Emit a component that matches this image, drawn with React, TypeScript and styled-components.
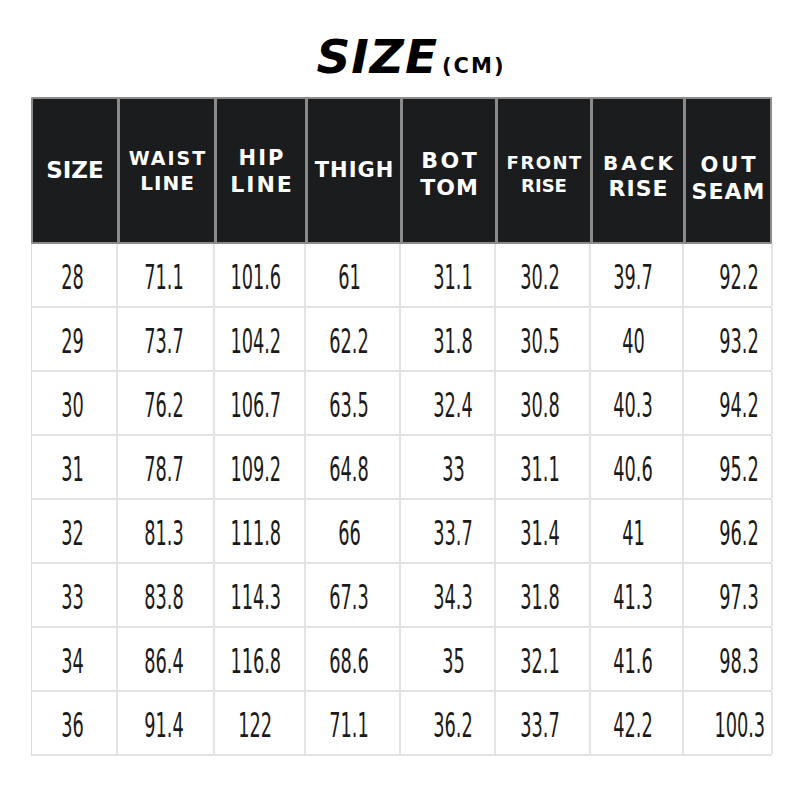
import React from 'react'
import styled, { createGlobalStyle } from 'styled-components'

const GlobalStyle = createGlobalStyle`
  html, body {
    margin: 0;
    padding: 0;
    background: #ffffff;
  }
`

const COLUMNS = '86px 97px 91px 95px 95px 95px 93px 89px'

const Page = styled.div`
  width: 800px;
  height: 800px;
  background: #ffffff;
  display: flex;
  flex-direction: column;
  align-items: flex-start;
`

const Title = styled.h1`
  margin: 0;
  align-self: center;
  padding: 33px 0 0 22px;
  height: 97px;
  box-sizing: border-box;
  display: flex;
  align-items: baseline;
  font-family: 'DejaVu Sans', sans-serif;
  font-weight: 700;
  font-style: oblique;
  color: #000000;
  line-height: 1;
`

const TitleMain = styled.span`
  font-size: 47px;
  letter-spacing: 1px;
`

const TitleUnit = styled.span`
  font-size: 21px;
  letter-spacing: 2px;
  font-style: normal;
  margin-left: 4px;
`

const Table = styled.div`
  margin-left: 31px;
  width: 741px;
  display: flex;
  flex-direction: column;
`

const HeaderRow = styled.div`
  display: grid;
  grid-template-columns: ${COLUMNS};
  height: 147px;
  box-sizing: border-box;
  background: #8b8b8b;
  border-radius: 1px;
`

const HeaderCell = styled.div<{ $shift: number; $last: boolean }>`
  background: #1b1c1e;
  margin: 2px ${(p) => (p.$last ? 2 : 0)}px 2px 3px;
  display: flex;
  flex-direction: column;
  align-items: center;
  justify-content: center;
  gap: 5px;
  padding-top: ${(p) => p.$shift}px;
  box-sizing: border-box;
  &:first-child {
    margin-left: 2px;
  }
`

const HeaderLine = styled.span<{ $size: number; $spacing: number }>`
  font-family: 'DejaVu Sans', 'Verdana', sans-serif;
  font-weight: 700;
  color: #ffffff;
  font-size: ${(p) => p.$size}px;
  letter-spacing: ${(p) => p.$spacing}px;
  margin-right: -${(p) => p.$spacing}px;
  line-height: 1;
  white-space: nowrap;
`

const BodyRow = styled.div`
  display: grid;
  grid-template-columns: ${COLUMNS};
  height: 64px;
  box-sizing: border-box;
  border-bottom: 2px solid #e3e3e3;
  border-left: 1px solid #dcdcdc;
`

const Cell = styled.div<{ $nudge: number }>`
  border-right: 2px solid #e3e3e3;
  display: flex;
  align-items: center;
  justify-content: center;
  padding-left: ${(p) => Math.max(p.$nudge, 0)}px;
  padding-right: ${(p) => Math.max(-p.$nudge, 0)}px;
  padding-top: 4px;
  box-sizing: border-box;
`

const Value = styled.span`
  font-family: 'DejaVu Sans Condensed', 'DejaVu Sans', sans-serif;
  font-weight: 400;
  font-size: 34px;
  color: #1a1a1a;
  display: inline-block;
  transform: scaleX(0.58);
  line-height: 1;
`

type Line = { text: string; size: number; spacing: number }
type Head = { lines: Line[]; shift: number }

const HEADERS: Head[] = [
  { lines: [{ text: 'SIZE', size: 23, spacing: 0 }], shift: 0 },
  {
    lines: [
      { text: 'WAIST', size: 19, spacing: 2 },
      { text: 'LINE', size: 20, spacing: 1 },
    ],
    shift: 0,
  },
  {
    lines: [
      { text: 'HIP', size: 21, spacing: 2 },
      { text: 'LINE', size: 22, spacing: 2 },
    ],
    shift: 2,
  },
  { lines: [{ text: 'THIGH', size: 21, spacing: 1 }], shift: 0 },
  {
    lines: [
      { text: 'BOT', size: 22, spacing: 2.5 },
      { text: 'TOM', size: 22, spacing: 1 },
    ],
    shift: 8,
  },
  {
    lines: [
      { text: 'FRONT', size: 18, spacing: 1.5 },
      { text: 'RISE', size: 18, spacing: 0 },
    ],
    shift: 8,
  },
  {
    lines: [
      { text: 'BACK', size: 20, spacing: 3 },
      { text: 'RISE', size: 22, spacing: 1 },
    ],
    shift: 12,
  },
  {
    lines: [
      { text: 'OUT', size: 21, spacing: 3 },
      { text: 'SEAM', size: 22, spacing: 1 },
    ],
    shift: 16,
  },
]

const NUDGE = [-4, -2, -8, -6, 12, -4, -6, 24]

const ROWS: string[][] = [
  ['28', '71.1', '101.6', '61', '31.1', '30.2', '39.7', '92.2'],
  ['29', '73.7', '104.2', '62.2', '31.8', '30.5', '40', '93.2'],
  ['30', '76.2', '106.7', '63.5', '32.4', '30.8', '40.3', '94.2'],
  ['31', '78.7', '109.2', '64.8', '33', '31.1', '40.6', '95.2'],
  ['32', '81.3', '111.8', '66', '33.7', '31.4', '41', '96.2'],
  ['33', '83.8', '114.3', '67.3', '34.3', '31.8', '41.3', '97.3'],
  ['34', '86.4', '116.8', '68.6', '35', '32.1', '41.6', '98.3'],
  ['36', '91.4', '122', '71.1', '36.2', '33.7', '42.2', '100.3'],
]

const App: React.FC = () => (
  <Page>
    <GlobalStyle />
    <Title>
      <TitleMain>SIZE</TitleMain>
      <TitleUnit>(CM)</TitleUnit>
    </Title>
    <Table>
      <HeaderRow>
        {HEADERS.map((h, i) => (
          <HeaderCell key={i} $shift={h.shift} $last={i === HEADERS.length - 1}>
            {h.lines.map((l) => (
              <HeaderLine key={l.text} $size={l.size} $spacing={l.spacing}>
                {l.text}
              </HeaderLine>
            ))}
          </HeaderCell>
        ))}
      </HeaderRow>
      {ROWS.map((row) => (
        <BodyRow key={row[0]}>
          {row.map((v, i) => (
            <Cell key={i} $nudge={NUDGE[i]}>
              <Value>{v}</Value>
            </Cell>
          ))}
        </BodyRow>
      ))}
    </Table>
  </Page>
)

export default App
